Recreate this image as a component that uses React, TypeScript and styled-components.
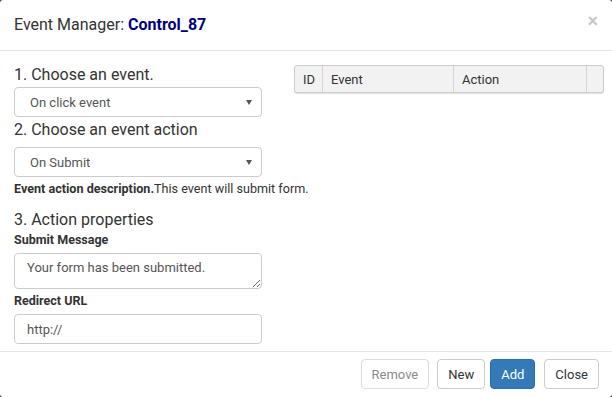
import React from "react";
import styled, { createGlobalStyle } from "styled-components";

const Global = createGlobalStyle`
  html, body { margin: 0; padding: 0; width: 612px; height: 397px; background: #2b2b2b; overflow: hidden; }
  #root { width: 612px; height: 397px; }
  * { box-sizing: border-box; }
`;

const Modal = styled.div`
  width: 612px;
  height: 397px;
  background: #fff;
  border-radius: 3px;
  display: flex;
  flex-direction: column;
  font-family: Roboto, "Liberation Sans", sans-serif;
  color: #333;
  overflow: hidden;
`;

const Header = styled.div`
  height: 51px;
  flex: none;
  padding: 15px 14px;
  border-bottom: 1px solid #e5e5e5;
  display: flex;
  justify-content: space-between;
  align-items: flex-start;
`;

const Title = styled.h4`
  margin: 0;
  font-size: 16px;
  line-height: 20px;
  font-weight: 400;
  color: #333;
`;

const Name = styled.span`
  color: #00007f;
  font-weight: 700;
`;

const CloseX = styled.button`
  border: 0;
  background: none;
  padding: 0;
  margin: -4px 0 0 0;
  font-family: "Liberation Sans", Arial, sans-serif;
  font-size: 18px;
  font-weight: 700;
  line-height: 20px;
  color: #c6c6c6;
  cursor: pointer;
`;

const Body = styled.div`
  flex: 1;
  min-height: 0;
  padding: 14px 8px 0 14px;
  display: grid;
  grid-template-columns: 248px 310px;
  column-gap: 32px;
  align-items: start;
`;

const LeftCol = styled.div`
  display: flex;
  flex-direction: column;
`;

const Section = styled.h4<{ $top?: number; $bottom?: number }>`
  margin: ${(p) => p.$top ?? 0}px 0 ${(p) => p.$bottom ?? 0}px;
  font-size: 16px;
  line-height: 20px;
  font-weight: 400;
  color: #333;
`;

const SelectBox = styled.div<{ $bottom?: number }>`
  height: 30px;
  border: 1px solid #ccc;
  border-radius: 4px;
  padding: 0 9px 0 15px;
  display: flex;
  align-items: center;
  justify-content: space-between;
  font-size: 13px;
  color: #555;
  background: #fff;
  margin-bottom: ${(p) => p.$bottom ?? 0}px;
`;

const Caret = styled.span`
  width: 0;
  height: 0;
  border-left: 3px solid transparent;
  border-right: 3px solid transparent;
  border-top: 5px solid #555;
`;

const Description = styled.div`
  margin-top: 3px;
  font-size: 12.6px;
  line-height: 17px;
  color: #333;
  white-space: nowrap;
`;

const Strong = styled.b`
  font-weight: 700;
`;

const Label = styled.div<{ $top?: number }>`
  margin-top: ${(p) => p.$top ?? 0}px;
  font-size: 12.5px;
  line-height: 17px;
  font-weight: 700;
  color: #333;
`;

const TextArea = styled.textarea`
  display: block;
  margin-top: 5px;
  width: 248px;
  height: 36px;
  border: 1px solid #ccc;
  border-radius: 4px;
  padding: 5px 12px;
  font-family: Roboto, "Liberation Sans", sans-serif;
  font-size: 13px;
  line-height: 17px;
  color: #555;
  resize: vertical;
  outline: none;
`;

const TextInput = styled.input`
  display: block;
  margin-top: 5px;
  width: 248px;
  height: 30px;
  border: 1px solid #ccc;
  border-radius: 4px;
  padding: 0 12px;
  font-family: Roboto, "Liberation Sans", sans-serif;
  font-size: 13px;
  color: #555;
  outline: none;
`;

const Table = styled.table`
  width: 310px;
  border-collapse: separate;
  border-spacing: 0;
  border: 1px solid #ccc;
  border-radius: 3px;
  box-shadow: 0 1px 1px rgba(0, 0, 0, 0.12);
  background: #f2f2f2;
  table-layout: fixed;
  font-size: 13px;
  color: #333;
`;

const Th = styled.th<{ $w: number; $last?: boolean }>`
  width: ${(p) => p.$w}px;
  height: 26px;
  padding: 0 0 0 8px;
  text-align: left;
  font-weight: 400;
  border-right: ${(p) => (p.$last ? "0" : "1px solid #d6d6d6")};
`;

const Footer = styled.div`
  height: 46px;
  flex: none;
  border-top: 1px solid #e5e5e5;
  padding: 7px 13px 0 0;
  display: flex;
  justify-content: flex-end;
  align-items: flex-start;
`;

const Button = styled.button<{ $variant?: "default" | "primary" | "disabled"; $ml?: number }>`
  height: 30px;
  padding: 0 10px;
  margin-left: ${(p) => p.$ml ?? 0}px;
  border-radius: 4px;
  font-family: Roboto, "Liberation Sans", sans-serif;
  font-size: 13px;
  cursor: pointer;
  border: 1px solid ${(p) => (p.$variant === "primary" ? "#2e6da4" : p.$variant === "disabled" ? "#ddd" : "#ccc")};
  background: ${(p) => (p.$variant === "primary" ? "#337ab7" : "#fff")};
  color: ${(p) => (p.$variant === "primary" ? "#fff" : p.$variant === "disabled" ? "#8a8a8a" : "#333")};
`;

export default function App() {
  return (
    <>
      <Global />
      <Modal>
        <Header>
          <Title>
            Event Manager: <Name>Control_87</Name>
          </Title>
          <CloseX aria-label="Close">×</CloseX>
        </Header>
        <Body>
          <LeftCol>
            <Section $bottom={2}>1. Choose an event.</Section>
            <SelectBox>
              <span>On click event</span>
              <Caret />
            </SelectBox>
            <Section $top={3} $bottom={7}>2. Choose an event action</Section>
            <SelectBox>
              <span>On Submit</span>
              <Caret />
            </SelectBox>
            <Description>
              <Strong>Event action description.</Strong>This event will submit form.
            </Description>
            <Section $top={13}>3. Action properties</Section>
            <Label $top={1}>Submit Message</Label>
            <TextArea defaultValue="Your form has been submitted." />
            <Label $top={3}>Redirect URL</Label>
            <TextInput defaultValue="http://" />
          </LeftCol>
          <Table>
            <thead>
              <tr>
                <Th $w={28}>ID</Th>
                <Th $w={131}>Event</Th>
                <Th $w={133}>Action</Th>
                <Th $w={16} $last />
              </tr>
            </thead>
          </Table>
        </Body>
        <Footer>
          <Button $variant="disabled" disabled>Remove</Button>
          <Button $ml={8}>New</Button>
          <Button $variant="primary" $ml={5}>Add</Button>
          <Button $ml={9}>Close</Button>
        </Footer>
      </Modal>
    </>
  );
}
